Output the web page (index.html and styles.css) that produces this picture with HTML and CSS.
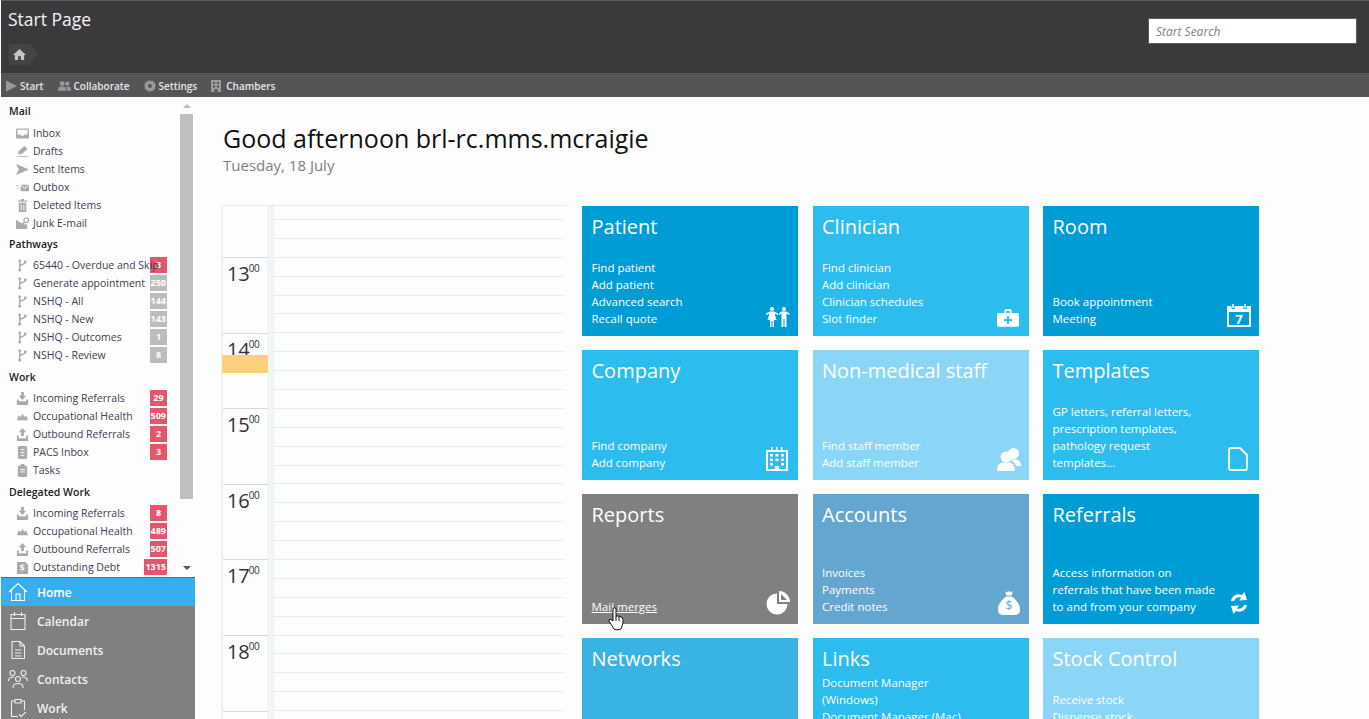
FILE: index.html
```html
<!DOCTYPE html>
<html lang="en">
<head>
<meta charset="utf-8">
<title>Start Page</title>
<link rel="stylesheet" href="styles.css">
</head>
<body>
<div class="app">
  <header class="head">
    <div class="head-left">
      <h1 class="page-title">Start Page</h1>
      <div class="crumb"><svg class="crumb-icon" viewBox="0 0 14 14"><path d="M7 1 L14 7.5 H12 V13 H8.5 V9 H5.5 V13 H2 V7.5 H0 Z" fill="#c4c4c4"/></svg></div>
    </div>
    <input class="search" type="text" placeholder="Start Search">
  </header>
  <nav class="ribbon">
    <span class="rib-item"><svg class="rib-icon" viewBox="0 0 12 12"><path d="M0 0 L12 6 L0 12 Z" fill="#999"/></svg>Start</span>
    <span class="rib-item"><svg class="rib-icon rib-wide" viewBox="0 0 14 12"><circle cx="4.5" cy="3.5" r="2.6" fill="#999"/><circle cx="10" cy="3.5" r="2.3" fill="#999"/><path d="M0 11 C0 7 2 6.5 4.5 6.5 S9 7 9 11 Z M10 6.5 C12.5 6.5 14 7 14 11 H10 C10 9 9.5 7.5 8.500 7 Z" fill="#999"/></svg>Collaborate</span>
    <span class="rib-item"><svg class="rib-icon rib-gear" viewBox="0 0 12 12"><path d="M6 0 L7.300 1.200 9 .8 9.700 2.400 11.300 3 11 4.700 12 6 11 7.300 11.300 9 9.700 9.600 9 11.200 7.300 10.800 6 12 4.700 10.800 3 11.200 2.300 9.600.7 9 1 7.300 0 6 1 4.700.7 3 2.300 2.400 3 .8 4.700 1.200Z" fill="#999"/><circle cx="6" cy="6" r="1.900" fill="#555557"/></svg>Settings</span>
    <span class="rib-item"><svg class="rib-icon rib-bldg" viewBox="0 0 10 12"><path fill-rule="evenodd" d="M0 0 H10 V12 H6.500 V9 H3.500 V12 H0 Z M2 2 V4 H4 V2 Z M6 2 V4 H8 V2 Z M2 5.500 V7.500 H4 V5.500 Z M6 5.500 V7.500 H8 V5.500 Z" fill="#999"/></svg>Chambers</span>
  </nav>
  <div class="body">
    <aside class="side">
      <div class="side-scroll">
        <div class="side-list">
          <section class="sec">
            <h2 class="sec-title">Mail</h2>
            <div class="item"><svg class="ico" viewBox="0 0 14 14"><path fill-rule="evenodd" d="M1.500 1.500 H12.500 Q14 1.500 14 3 V11 Q14 12.500 12.500 12.500 H1.500 Q0 12.500 0 11 V3 Q0 1.500 1.500 1.500 Z M1.500 3 V8 H4.500 L6 9.500 H8 L9.500 8 H12.500 V3 Z" fill="#aaa"/></svg><span class="name">Inbox</span></div>
            <div class="item"><svg class="ico" viewBox="0 0 14 14"><path d="M9 1 L12.500 4 L6 10 H2.500 V7 Z M1 12 H13 V13 H1 Z" fill="#aaa"/></svg><span class="name">Drafts</span></div>
            <div class="item"><svg class="ico" viewBox="0 0 14 14"><path d="M0 1 L14 7 L0 13 L3 7 Z" fill="#aaa"/></svg><span class="name">Sent Items</span></div>
            <div class="item"><svg class="ico" viewBox="0 0 14 14"><path d="M5 4 H14 V11 H5 Z" fill="#aaa"/><path d="M5 4 L9.500 8 L14 4" stroke="#fff" fill="none"/><path d="M0 5 H3 M1 7.500 H3" stroke="#bbb"/></svg><span class="name">Outbox</span></div>
            <div class="item"><svg class="ico" viewBox="0 0 14 14"><path fill-rule="evenodd" d="M5.500 0 H8.500 V1.500 H12 V3 H2 V1.500 H5.500 Z M3 4 H11 V14 H3 Z M5 6 V12 H6 V6 Z M8 6 V12 H9 V6 Z" fill="#aaa"/></svg><span class="name">Deleted Items</span></div>
            <div class="item"><svg class="ico" viewBox="0 0 14 14"><path d="M0 3 L6 7 L9 5 V8 H12 V13 H0 Z" fill="#aaa"/><circle cx="11" cy="3.500" r="2.500" fill="none" stroke="#aaa" stroke-width="1.300"/></svg><span class="name">Junk E-mail</span></div>
          </section>
          <section class="sec">
            <h2 class="sec-title">Pathways</h2>
            <div class="item"><svg class="ico" viewBox="0 0 14 14"><path d="M4 1 V13 M4 8 C4 5 10 7 10 3" stroke="#aaa" stroke-width="1.500" fill="none"/><circle cx="4" cy="2" r="1.500" fill="#aaa"/><circle cx="4" cy="12" r="1.500" fill="#aaa"/><circle cx="10" cy="3" r="1.500" fill="#aaa"/></svg><span class="name">65440 - Overdue and Skip</span><span class="badge red">3</span></div>
            <div class="item"><svg class="ico" viewBox="0 0 14 14"><path d="M4 1 V13 M4 8 C4 5 10 7 10 3" stroke="#aaa" stroke-width="1.500" fill="none"/><circle cx="4" cy="2" r="1.500" fill="#aaa"/><circle cx="4" cy="12" r="1.500" fill="#aaa"/><circle cx="10" cy="3" r="1.500" fill="#aaa"/></svg><span class="name">Generate appointment</span><span class="badge grey">250</span></div>
            <div class="item"><svg class="ico" viewBox="0 0 14 14"><path d="M4 1 V13 M4 8 C4 5 10 7 10 3" stroke="#aaa" stroke-width="1.500" fill="none"/><circle cx="4" cy="2" r="1.500" fill="#aaa"/><circle cx="4" cy="12" r="1.500" fill="#aaa"/><circle cx="10" cy="3" r="1.500" fill="#aaa"/></svg><span class="name">NSHQ - All</span><span class="badge grey">144</span></div>
            <div class="item"><svg class="ico" viewBox="0 0 14 14"><path d="M4 1 V13 M4 8 C4 5 10 7 10 3" stroke="#aaa" stroke-width="1.500" fill="none"/><circle cx="4" cy="2" r="1.500" fill="#aaa"/><circle cx="4" cy="12" r="1.500" fill="#aaa"/><circle cx="10" cy="3" r="1.500" fill="#aaa"/></svg><span class="name">NSHQ - New</span><span class="badge grey">143</span></div>
            <div class="item"><svg class="ico" viewBox="0 0 14 14"><path d="M4 1 V13 M4 8 C4 5 10 7 10 3" stroke="#aaa" stroke-width="1.500" fill="none"/><circle cx="4" cy="2" r="1.500" fill="#aaa"/><circle cx="4" cy="12" r="1.500" fill="#aaa"/><circle cx="10" cy="3" r="1.500" fill="#aaa"/></svg><span class="name">NSHQ - Outcomes</span><span class="badge grey">1</span></div>
            <div class="item"><svg class="ico" viewBox="0 0 14 14"><path d="M4 1 V13 M4 8 C4 5 10 7 10 3" stroke="#aaa" stroke-width="1.500" fill="none"/><circle cx="4" cy="2" r="1.500" fill="#aaa"/><circle cx="4" cy="12" r="1.500" fill="#aaa"/><circle cx="10" cy="3" r="1.500" fill="#aaa"/></svg><span class="name">NSHQ - Review</span><span class="badge grey">8</span></div>
          </section>
          <section class="sec">
            <h2 class="sec-title">Work</h2>
            <div class="item"><svg class="ico" viewBox="0 0 14 14"><path d="M5.500 0 H8.500 V4 H11 L7 8.500 L3 4 H5.500 Z M1 8 H3 V10 H11 V8 H13 V14 H1 Z" fill="#aaa"/></svg><span class="name">Incoming Referrals</span><span class="badge red">29</span></div>
            <div class="item"><svg class="ico" viewBox="0 0 14 14"><path d="M1 11 L3 6 L5 7.500 L7 4 L9 7.500 L11 6 L13 11 Z" fill="#aaa"/></svg><span class="name">Occupational Health</span><span class="badge red">509</span></div>
            <div class="item"><svg class="ico" viewBox="0 0 14 14"><path d="M5.500 8.500 H8.500 V4.500 H11 L7 0 L3 4.500 H5.500 Z M1 8 H3 V11 H11 V8 H13 V14 H1 Z" fill="#aaa"/></svg><span class="name">Outbound Referrals</span><span class="badge red">2</span></div>
            <div class="item"><svg class="ico" viewBox="0 0 14 14"><rect x="2" y="0" width="10" height="14" rx="2" fill="#aaa"/><path d="M5 4 H9 M5 7 H9 M5 10 H9" stroke="#fff" stroke-width="1.200"/></svg><span class="name">PACS Inbox</span><span class="badge red">3</span></div>
            <div class="item"><svg class="ico" viewBox="0 0 14 14"><rect x="2" y="1.500" width="10" height="12.500" rx="2" fill="#aaa"/><rect x="5" y="0" width="4" height="3" fill="#aaa"/><path d="M4.500 6 H9.500 M4.500 8.500 H9.500" stroke="#fff"/></svg><span class="name">Tasks</span></div>
          </section>
          <section class="sec">
            <h2 class="sec-title">Delegated Work</h2>
            <div class="item"><svg class="ico" viewBox="0 0 14 14"><path d="M5.500 0 H8.500 V4 H11 L7 8.500 L3 4 H5.500 Z M1 8 H3 V10 H11 V8 H13 V14 H1 Z" fill="#aaa"/></svg><span class="name">Incoming Referrals</span><span class="badge red">8</span></div>
            <div class="item"><svg class="ico" viewBox="0 0 14 14"><path d="M1 11 L3 6 L5 7.500 L7 4 L9 7.500 L11 6 L13 11 Z" fill="#aaa"/></svg><span class="name">Occupational Health</span><span class="badge red">489</span></div>
            <div class="item"><svg class="ico" viewBox="0 0 14 14"><path d="M5.500 8.500 H8.500 V4.500 H11 L7 0 L3 4.500 H5.500 Z M1 8 H3 V11 H11 V8 H13 V14 H1 Z" fill="#aaa"/></svg><span class="name">Outbound Referrals</span><span class="badge red">507</span></div>
            <div class="item"><svg class="ico" viewBox="0 0 14 14"><path d="M1 1 H10 L13 4 V14 H1 Z" fill="#aaa"/><text class="ico-dollar" x="6.500" y="11">$</text></svg><span class="name">Outstanding Debt</span><span class="badge red">1315</span></div>
          </section>
        </div>
        <div class="scrollbar">
          <span class="arrow-up"></span>
          <span class="thumb"></span>
          <span class="arrow-down"></span>
        </div>
      </div>
      <ul class="nav">
        <li class="nav-item active"><svg class="nav-ico" viewBox="0 0 20 20"><path d="M1 10 L10 1.500 L19 10 M3.500 8 V18.500 H16.500 V8 M8 18.500 V12 H12 V18.500" fill="none" stroke="#fff" stroke-width="1.100"/></svg>Home</li>
        <li class="nav-item"><svg class="nav-ico" viewBox="0 0 20 20"><path d="M3 3.500 H17 V18.500 H3 Z M3 7.500 H17 M6.500 1 V5 M13.500 1 V5" fill="none" stroke="#eee" stroke-width="1.100"/></svg>Calendar</li>
        <li class="nav-item"><svg class="nav-ico" viewBox="0 0 20 20"><path d="M4 1.500 H12 L16.500 6 V18.500 H4 Z M12 1.500 V6 H16.500 M7 10 H13.500 M7 13 H13.500 M7 16 H13.500" fill="none" stroke="#eee" stroke-width="1.100"/></svg>Documents</li>
        <li class="nav-item"><svg class="nav-ico" viewBox="0 0 20 20"><g fill="none" stroke="#eee" stroke-width="1.100"><circle cx="4.500" cy="4" r="2.500"/><circle cx="15.500" cy="4" r="2.500"/><circle cx="10" cy="10" r="2.500"/><path d="M.5 12 C.5 8.500 3 8 6 8 M19.500 12 C19.500 8.500 17 8 14 8 M5 19 C5 15 7 14.500 10 14.500 S15 15 15 19"/></g></svg>Contacts</li>
        <li class="nav-item"><svg class="nav-ico" viewBox="0 0 20 20"><path d="M7 3 H3.500 V18.500 H10 M13 3 H16.500 V12 M7 1.500 H13 V5 H7 Z M11 16 L13 18.500 L18 14" fill="none" stroke="#eee" stroke-width="1.100"/></svg>Work</li>
      </ul>
    </aside>
    <main class="main">
      <div class="greet">Good afternoon brl-rc.mms.mcraigie</div>
      <div class="date">Tuesday, 18 July</div>
      <div class="columns">
        <div class="cal">
          <div class="hours">
            <div class="hour first"></div>
            <div class="hour"><span class="h">13<sup>00</sup></span></div>
            <div class="hour"><span class="h">14<sup>00</sup></span><span class="now"></span></div>
            <div class="hour"><span class="h">15<sup>00</sup></span></div>
            <div class="hour"><span class="h">16<sup>00</sup></span></div>
            <div class="hour"><span class="h">17<sup>00</sup></span></div>
            <div class="hour"><span class="h">18<sup>00</sup></span></div>
          </div>
          <div class="strip"></div>
          <div class="slots">
            <div class="slot top"></div><div class="slot"></div><div class="slot"></div><div class="slot"></div><div class="slot"></div><div class="slot"></div><div class="slot"></div><div class="slot"></div><div class="slot"></div><div class="slot"></div><div class="slot"></div><div class="slot"></div><div class="slot"></div><div class="slot"></div><div class="slot"></div><div class="slot"></div><div class="slot"></div><div class="slot"></div><div class="slot"></div><div class="slot"></div><div class="slot"></div><div class="slot"></div><div class="slot"></div><div class="slot"></div><div class="slot"></div><div class="slot"></div><div class="slot"></div>
          </div>
        </div>
        <div class="tiles">
          <article class="tile c-deep">
            <h3 class="tile-title">Patient</h3>
            <div class="foot">
              <div class="links"><span>Find patient</span><span>Add patient</span><span>Advanced search</span><span>Recall quote</span></div>
              <svg class="t-ico t-people" viewBox="0 0 24 20"><g fill="#fff"><circle cx="6" cy="2" r="2"/><path d="M0 6.500 L4 4.500 H8 L12 6.500 V8 L8.500 6.500 L10.500 13 H8 V20 H6.500 V14 H5.500 V20 H4 V13 H1.500 L3.500 6.500 L0 8 Z"/><circle cx="18" cy="2" r="2"/><path d="M13 6.500 L15.500 4.500 H20.500 L23.500 6.500 V8 L20.500 6.500 V20 H18.500 V12 H17.500 V20 H15.500 V6.500 L13 8 Z"/></g></svg>
            </div>
          </article>
          <article class="tile c-sky">
            <h3 class="tile-title">Clinician</h3>
            <div class="foot">
              <div class="links"><span>Find clinician</span><span>Add clinician</span><span>Clinician schedules</span><span>Slot finder</span></div>
              <svg class="t-ico t-kit" viewBox="0 0 24 19"><path fill-rule="evenodd" d="M8 4 V1.500 Q8 0 9.500 0 H14.500 Q16 0 16 1.500 V4 H22.500 Q24 4 24 5.500 V18 Q24 19 22.500 19 H1.500 Q0 19 0 18 V5.500 Q0 4 1.500 4 Z M10 1.800 V4 H14 V1.800 Z M10.800 7.500 V10.500 H7.800 V13 H10.800 V16 H13.200 V13 H16.200 V10.500 H13.200 V7.500 Z" fill="#fff"/></svg>
            </div>
          </article>
          <article class="tile c-deep">
            <h3 class="tile-title">Room</h3>
            <div class="foot">
              <div class="links"><span>Book appointment</span><span>Meeting</span></div>
              <svg class="t-ico" viewBox="0 0 24 24"><path d="M1 4 H23 V23 H1 Z" fill="none" stroke="#fff" stroke-width="2"/><path d="M1 4 H23 V9 H1 Z" fill="#fff"/><path d="M6 1 V6 M18 1 V6" stroke="#009cd6" stroke-width="3"/><path d="M6 1 V5 M18 1 V5" stroke="#fff" stroke-width="1.500"/><text class="cal-num" x="12" y="21">7</text></svg>
            </div>
          </article>
          <article class="tile c-sky">
            <h3 class="tile-title">Company</h3>
            <div class="foot">
              <div class="links"><span>Find company</span><span>Add company</span></div>
              <svg class="t-ico t-bldg" viewBox="0 0 22 24"><path fill-rule="evenodd" d="M5 0 H6.500 V3 H5 Z M10 0 H11.500 V3 H10 Z M15 0 H16.500 V3 H15 Z M0 3 H22 V24 H0 Z M2 5 V22 H9 V19 H13 V22 H20 V5 Z" fill="#fff"/><path d="M4 7 H7 V9.500 H4 Z M9.500 7 H12.500 V9.500 H9.500 Z M15 7 H18 V9.500 H15 Z M4 11.500 H7 V14 H4 Z M9.500 11.500 H12.500 V14 H9.500 Z M15 11.500 H18 V14 H15 Z M4 16 H7 V18.500 H4 Z M15 16 H18 V18.500 H15 Z" fill="#fff"/></svg>
            </div>
          </article>
          <article class="tile c-pale">
            <h3 class="tile-title">Non-medical staff</h3>
            <div class="foot">
              <div class="links"><span>Find staff member</span><span>Add staff member</span></div>
              <svg class="t-ico" viewBox="0 0 24 24"><circle cx="16.500" cy="6.500" r="5.500" fill="#fff"/><path d="M13 13 Q24 10 24 19 H19 Q18 15 13 13 Z" fill="#fff"/><circle cx="9" cy="10" r="5.500" fill="#fff"/><path d="M0 24 Q0 16 5.500 15.500 H12.500 Q18 16 18 24 Z" fill="#fff"/></svg>
            </div>
          </article>
          <article class="tile c-sky">
            <h3 class="tile-title">Templates</h3>
            <div class="foot">
              <div class="links"><span>GP letters, referral letters,</span><span>prescription templates,</span><span>pathology request</span><span>templates...</span></div>
              <svg class="t-ico t-doc" viewBox="0 0 20 24"><path d="M3 1 H12 L19 8 V21 Q19 23 17 23 H3 Q1 23 1 21 V3 Q1 1 3 1 Z" fill="none" stroke="#fff" stroke-width="1.800" stroke-linejoin="round"/></svg>
            </div>
          </article>
          <article class="tile c-grey">
            <h3 class="tile-title">Reports</h3>
            <div class="foot">
              <div class="links"><a class="link-hover">Mail merges</a></div>
              <svg class="t-ico" viewBox="0 0 24 24"><path fill-rule="evenodd" d="M11 2.500 A10.500 10.500 0 1 0 21.500 13 H11 Z" fill="#fff"/><path fill-rule="evenodd" d="M13 0 A11 11 0 0 1 24 11 H13 Z M15 3 V9 H21 Z" fill="#fff"/></svg>
            </div>
            <svg class="hand" viewBox="0 0 16 24"><path d="M5 1.500 Q6.500 0 8 1.500 V9 Q11 8.500 14 10.500 Q15.500 12 15 16 L13 22 Q9 24 6 22 L1 14 Q.5 12 3 12.500 L5 14 Z" fill="#fff" stroke="#111" stroke-width="1"/><path d="M8 9 V14 M11 9.500 V14" stroke="#111"/></svg>
          </article>
          <article class="tile c-steel">
            <h3 class="tile-title">Accounts</h3>
            <div class="foot">
              <div class="links"><span>Invoices</span><span>Payments</span><span>Credit notes</span></div>
              <svg class="t-ico" viewBox="0 0 24 26"><path d="M8 0 L10 1.500 L12 0 L14 1.500 L16 0 L15 5 H9 Z M9 6 H15 C19 9 24 14 24 20 Q24 26 18 26 H6 Q0 26 0 20 C0 14 5 9 9 6 Z" fill="#fff"/><text class="money" x="12" y="21">$</text></svg>
            </div>
          </article>
          <article class="tile c-deep">
            <h3 class="tile-title">Referrals</h3>
            <div class="foot">
              <div class="links"><span>Access information on</span><span>referrals that have been made</span><span>to and from your company</span></div>
              <svg class="t-ico t-sync" viewBox="0 0 18 24"><path d="M1 10 C2 4 8 2 12 4 L14.500 1 L17 9 L9 9.500 L11 6.500 C8 5.500 5 7 4 10 Z M17 14 C16 20 10 22 6 20 L3.500 23 L1 15 L9 14.500 L7 17.500 C10 18.500 13 17 14 14 Z" fill="#fff"/></svg>
            </div>
          </article>
          <article class="tile c-net">
            <h3 class="tile-title">Networks</h3>
          </article>
          <article class="tile c-sky">
            <h3 class="tile-title">Links</h3>
            <div class="links links-top"><span>Document Manager</span><span>(Windows)</span><span>Document Manager (Mac)</span></div>
          </article>
          <article class="tile c-pale">
            <h3 class="tile-title">Stock Control</h3>
            <div class="links links-stock"><span>Receive stock</span><span>Dispense stock</span></div>
          </article>
        </div>
      </div>
    </main>
  </div>
</div>
</body>
</html>
```
FILE: styles.css
```css
* { box-sizing: border-box; }
html, body { margin: 0; padding: 0; height: 719px; overflow: hidden; background: #fdfdfd; }
body { font-family: "Open Sans", "Noto Sans", sans-serif; padding-left: 1px; }
.app { width: 1368px; height: 719px; display: flex; flex-direction: column; overflow: hidden; }

.head { height: 73px; background: #3a3a3c; border-top: 1px solid #5a5a5c; display: flex; justify-content: space-between; align-items: flex-start; padding: 0 12px 0 0; flex: none; }
.head-left { display: flex; flex-direction: column; }
.page-title { margin: 7px 0 0 7px; font-size: 17.500px; line-height: 22px; font-weight: 400; color: #f4f4f4; }
.crumb { margin: 14px 0 0 8px; width: 21px; height: 21px; background: #444446; position: relative; display: flex; align-items: center; justify-content: center; }
.crumb::after { content: ""; position: absolute; left: 21px; top: 0; border-left: 8px solid #444446; border-top: 10.500px solid transparent; border-bottom: 10.500px solid transparent; }
.crumb-icon { width: 13px; height: 13px; }
.search { margin-top: 17px; width: 209px; height: 26px; border: 1px solid #5c5c5e; background: #fff; padding: 0 7px; font: italic 12px "Open Sans", sans-serif; color: #777; outline: none; }
.search::placeholder { color: #808088; opacity: 1; }

.ribbon { height: 24px; background: #555557; display: flex; align-items: center; flex: none; padding: 2px 0 0 5px; gap: 14px; }
.rib-item { display: flex; align-items: center; font-size: 10px; font-weight: 600; color: #e6e6e6; }
.rib-icon { width: 11px; height: 12px; margin-right: 3px; }
.rib-wide { width: 13px; margin-right: 3px; }
.rib-gear { width: 12px; margin-right: 3px; }
.rib-bldg { width: 10px; margin-right: 5px; }

.body { flex: 1; display: flex; min-height: 0; }
.side { width: 194px; flex: none; display: flex; flex-direction: column; background: #fdfdfd; }
.side-scroll { height: 480px; flex: none; display: flex; overflow: hidden; }
.side-list { width: 179px; flex: none; padding: 6px 13px 0 8px; }
.sec { margin-bottom: 5px; }
.sec:first-child { margin-bottom: 4px; }
.sec-title { margin: 0 0 4px; font-size: 10.500px; line-height: 16px; font-weight: 600; color: #222; }
.sec:first-child .sec-title { margin-bottom: 5px; }
.item { height: 18px; display: flex; align-items: center; padding-left: 7px; font-size: 10.500px; color: #404050; white-space: nowrap; }
.ico { width: 13px; height: 13px; flex: none; margin-right: 4px; }
.ico-dollar { font: 700 9px "Open Sans", sans-serif; fill: #fff; text-anchor: middle; }
.name { position: relative; flex: 1; min-width: 0; }
.badge { flex: none; min-width: 17px; height: 16px; padding: 0 1px; font-size: 9px; line-height: 16px; font-weight: 700; color: #fff; text-align: center; }
.red { background: #e5566c; }
.grey { background: #bcbcbc; }

.scrollbar { width: 13px; display: flex; flex-direction: column; align-items: center; }
.thumb { width: 13px; height: 385px; background: #bfbfbf; margin: 6px 0 67px; flex: none; }
.arrow-up { margin-top: 7px; border-left: 4px solid transparent; border-right: 4px solid transparent; border-bottom: 4px solid #bbb; height: 0; width: 0; flex: none; }
.arrow-down { border-left: 4px solid transparent; border-right: 4px solid transparent; border-top: 4px solid #555; height: 0; width: 0; flex: none; }

.nav { list-style: none; margin: 0; padding: 0; flex: 1; background: #808080; border-top: 1px solid #6a6a6a; }
.nav-item { height: 29px; display: flex; align-items: center; padding: 1px 0 0 7px; font-size: 12px; font-weight: 600; color: #f0f0f0; }
.nav-item.active { background: #38aeef; height: 28px; padding-top: 0; color: #fff; }
.nav-ico { width: 20px; height: 20px; margin-right: 9px; flex: none; }

.main { flex: 1; min-width: 0; padding: 25px 0 0 28px; overflow: hidden; }
.greet { font-size: 25px; line-height: 32px; color: #111; }
.date { font-size: 15px; line-height: 20px; color: #808080; margin-top: 1px; }
.columns { display: flex; margin-top: 30px; }

.cal { width: 346px; flex: none; display: flex; height: 520px; border-top: 1px solid #ececec; margin-left: -2px; }
.hours { width: 46px; flex: none; border-left: 2px solid #eef1f1; }
.hour { height: 75.600px; border-bottom: 1px solid #d9d9d9; position: relative; padding: 4px 0 0 4px; color: #333; margin-right: -1px; }
.hour.first { height: 52px; }
.h { font-size: 20px; line-height: 24px; display: block; letter-spacing: -.3px; }
.h sup { font-size: 10px; line-height: 0; vertical-align: 9px; letter-spacing: -.4px; margin-left: -.5px; }
.now { position: absolute; left: -1px; right: 0; top: 21px; height: 18px; background: #fecf7c; }
.strip { width: 7px; flex: none; background: #eef6f9; }
.slots { flex: 1; }
.slot { height: 18.900px; border-bottom: 1px solid #ececec; margin-right: 2px; }
.slot.top { height: 14px; }

.tiles { display: grid; grid-template-columns: repeat(3, 216px); grid-auto-rows: 130px; column-gap: 14.500px; row-gap: 14px; margin: 1px 0 0 15px; }
.tile { padding: 8px 8px 9px 9.500px; color: #fff; display: flex; flex-direction: column; position: relative; overflow: hidden; }
.tile-title { margin: 0; font-size: 20px; line-height: 26px; font-weight: 400; }
.foot { margin-top: auto; display: flex; justify-content: space-between; align-items: flex-end; }
.links { display: flex; flex-direction: column; font-size: 11.500px; line-height: 17px; }
.links-top { margin-top: 2px; }
.links-stock { margin-top: 19px; }
.link-hover { text-decoration: underline; }
.t-ico { width: 24px; height: 24px; flex: none; }
.t-people { height: 20px; }
.t-kit { width: 22px; height: 18px; margin-right: 2px; }
.t-bldg { width: 22px; margin-right: 2px; }
.t-doc { width: 20px; margin-right: 3px; }
.t-sync { width: 18px; margin-right: 3px; }
.cal-num { font: 700 13px "Open Sans", sans-serif; fill: #fff; text-anchor: middle; }
.money { font: 400 13px "Open Sans", sans-serif; fill: #65a6d0; text-anchor: middle; }
.hand { position: absolute; left: 26px; top: 113px; width: 16px; height: 24px; overflow: visible; }

.c-deep { background: #009cd6; }
.c-sky { background: #2dbcee; }
.c-pale { background: #8bd6f6; }
.c-grey { background: #808080; overflow: visible; }
.c-steel { background: #65a6d0; }
.c-net { background: #38b3e4; }
```
